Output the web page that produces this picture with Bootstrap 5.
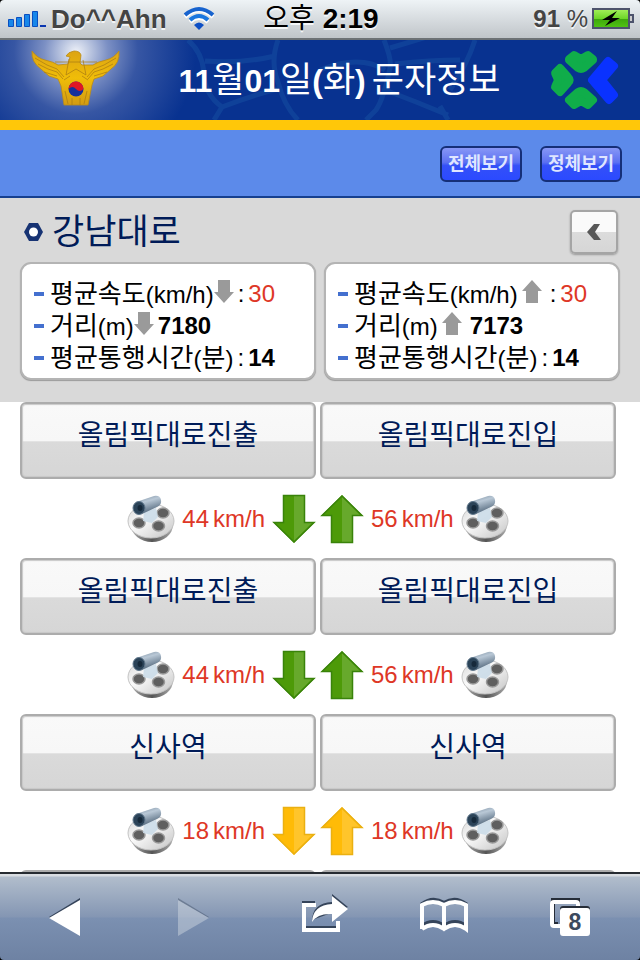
<!DOCTYPE html>
<html lang="ko">
<head>
<meta charset="utf-8">
<meta name="viewport" content="width=device-width, initial-scale=1">
<title>문자정보</title>
<link href="https://cdn.jsdelivr.net/npm/bootstrap@5.3.0/dist/css/bootstrap.min.css" rel="stylesheet">
<style>
  body { font-family: "Liberation Sans", "Noto Sans CJK KR", sans-serif; font-size: 24px; line-height: 32px; background: #000; color: #000; }
  svg { display: block; flex: none; overflow: visible; }
  .ko { font-size: 26px; }
  .status-bar { height: 40px; padding: 0 6px 0 8px; background: linear-gradient(#eef3f6, #c0c5c9); border-bottom: 2px solid #6d7275; border-radius: 4px 4px 0 0; color: #444; text-shadow: 0 2px 0 #f4f6f7; }
  .carrier { font-size: 26px; }
  .clock { font-size: 28px; color: #000; }
  .page-scroll { min-height: 0; overflow-y: auto; scrollbar-width: none; }
  .page-scroll::-webkit-scrollbar { display: none; }
  .banner { height: 90px; padding: 0 20px 0 31px; border-bottom: 10px solid #ffc709; background: radial-gradient(circle at 76px 12px, #eef1f8 0, #c3cde4 12px, #7c90c4 32px, rgba(70,98,170,.75) 62px, rgba(8,50,144,0) 120px), #083290; }
  .banner-art { z-index: 0; }
  .banner h1 { font-size: 32px; line-height: 40px; gap: 6px; }
  .big-ko { font-size: 35px; }
  .filter-bar { background: #5c8aea; border-bottom: 2px solid #17408f; padding: 16px 18px 14px; gap: 18px; }
  .filter-btn { width: 82px; height: 36px; border: 2px solid #152f78; border-radius: 6px; color: #dfe5ff; font-size: 18px; line-height: 30px; background: linear-gradient(#8797f6 0, #5b70f2 45%, #3450f8 55%, #2b4aff); }
  .summary { background: #d9d9d9; padding: 12px 20px 22px; }
  .summary h2 { font-size: 35px; line-height: 40px; color: #001b58; gap: 8px; padding-left: 3px; }
  .back-btn { width: 48px; height: 44px; margin-right: 2px; border: 2px solid #a5a5a5; border-radius: 5px; background: linear-gradient(#fafafa 50%, #dcdcdc 51%, #d6d6d6); box-shadow: 0 1px 2px #999; }
  .info-box { border: 2px solid #b4b4b4; border-radius: 11px; background: #fff; padding: 14px 12px 4px; height: 118px; box-shadow: 0 1px 1px #999; }
  .info-box li { height: 32px; }
  .pair { display: flex; gap: 4px; }
  .dash { width: 10px; height: 4px; background: #4470cf; margin-right: 6px; }
  .red { color: #de3726; }
  .arr-down { margin: 0 4px 6px 0; }
  .arr-up { margin: 0 8px 6px 4px; }
  .road { background: #fff; padding: 0 24px 0 20px; }
  .seg-btn { height: 77px; padding: 0 0 10px; color: #001b58; font-size: 28px; border: 2px solid #acacac; border-radius: 6px; background: linear-gradient(#f9f9f9 0, #f7f7f7 50%, #dadada 52%, #d6d6d6); box-shadow: inset 0 0 1px 1px #c8c8c8; }
  .speeds { height: 79px; }
  .speeds a { gap: 7px; text-decoration: none; color: #de3726; white-space: nowrap; }
  .toolbar { height: 88px; border-top: 2px solid #262b31; background: linear-gradient(#d9dde2 0 2px, #b1bdcc 3px, #8496b3 43px, #7b90b1 44px, #6e82a3); border-radius: 0 0 4px 4px; }
  .toolbar button { border: 0; background: none; padding: 0; }
</style>
<script src="https://cdn.jsdelivr.net/npm/bootstrap@5.3.0/dist/js/bootstrap.bundle.min.js"></script>
</head>
<body>
<svg width="0" height="0" class="position-absolute" aria-hidden="true">
  <defs>
    <linearGradient id="discFill" x1="0" y1="0" x2="1" y2="1"><stop offset="0" stop-color="#d4d4d4"/><stop offset=".4" stop-color="#fafafa"/><stop offset="1" stop-color="#c4c4c4"/></linearGradient>
    <linearGradient id="rimFill"><stop offset="0" stop-color="#aaa"/><stop offset=".5" stop-color="#555"/><stop offset="1" stop-color="#aaa"/></linearGradient>
    <linearGradient id="tubeFill" x1="0" y1="0" x2=".4" y2="1"><stop offset="0" stop-color="#75889a"/><stop offset=".4" stop-color="#b9c8d6"/><stop offset="1" stop-color="#53687c"/></linearGradient>
    <symbol id="cctv" viewBox="0 0 48 50">
      <ellipse cx="25" cy="31" rx="21" ry="17" fill="url(#rimFill)"/>
      <ellipse cx="24" cy="27" rx="23" ry="17" fill="url(#discFill)" stroke="#c4c4c4"/>
      <g fill="#5f5f5f" stroke="#999" stroke-width="1.5"><ellipse cx="12" cy="29" rx="6" ry="5"/><ellipse cx="31.500" cy="32" rx="6" ry="5"/><ellipse cx="36" cy="19" rx="6" ry="5"/></g>
      <path d="M17 18l12-4 2 9-6 6-9-2z" fill="#cbdbe8" opacity=".9"/>
      <path d="M9 8L27 2q6-1 7 4t-4 7L15 20z" fill="url(#tubeFill)"/>
      <ellipse cx="12" cy="14" rx="6" ry="6.500" fill="#2b4358" stroke="#61788c"/>
      <ellipse cx="13" cy="14" rx="2.500" ry="3" fill="#16293a"/>
    </symbol>
    <symbol id="arrow" viewBox="0 0 44 50">
      <path d="M11 1h22v27h10L22 49 1 28h10z" fill="currentColor"/>
      <path d="M22 2h10v27h8L22 47z" fill="#fff" opacity=".15"/>
      <path d="M11.500 1.500h21v27h9.500L22 48 2 28.500h9.500z" fill="none" stroke="var(--edge)" stroke-width="1.500"/>
    </symbol>
    <symbol id="arrowUp" viewBox="0 0 44 50">
      <path d="M11 49h22V22h10L22 1 1 22h10z" fill="currentColor"/>
      <path d="M22 48h10V21h8L22 3z" fill="#fff" opacity=".15"/>
      <path d="M11.500 48.500h21v-27h9.500L22 2 2 21.500h9.500z" fill="none" stroke="var(--edge)" stroke-width="1.500"/>
    </symbol>
    <symbol id="mini" viewBox="0 0 20 23"><path d="M4 0h12v12h4L10 23 0 12h4z" fill="#9a9a9a"/></symbol>
  </defs>
</svg>
<div class="vh-100 d-flex flex-column">
  <header class="status-bar d-flex align-items-center flex-shrink-0">
    <div class="col d-flex align-items-center">
      <svg width="39" height="18" viewBox="0 0 39 18"><g fill="#1787ea" stroke="#0a4ec0"><path d="M.5 9.500h5v7h-5zM8.500 7.500h5v9h-5zM16.500 4.500h5v12h-5zM24.500 1.500h5v15h-5z"/></g><path d="M32 15h6v2h-6z" fill="#0a36b0"/></svg>
      <strong class="carrier ms-1">Do^^Ahn</strong>
      <svg class="ms-3" width="32" height="24" viewBox="0 0 32 24" fill="none" stroke-width="4"><g stroke="#fff" transform="translate(0 1)"><path d="M2 9q14-13 28 0M7 14q9-8 18 0"/></g><path d="M2 8q14-12 28 0" stroke="#1763ce"/><path d="M7 13q9-8 18 0" stroke="#1976df"/><path d="M11 18q5-5 10 0l-5 5z" fill="#0d4fc5"/></svg>
    </div>
    <div class="clock"><span>오후</span> <strong>2:19</strong></div>
    <div class="col d-flex align-items-center justify-content-end">
      <span><strong>91</strong> %</span>
      <svg class="ms-1" width="42" height="22" viewBox="0 0 42 22"><defs><linearGradient id="bat" x2="0" y2="1"><stop stop-color="#a5f05c"/><stop offset=".5" stop-color="#6ed629"/><stop offset=".55" stop-color="#3fa90c"/><stop offset="1" stop-color="#52c514"/></linearGradient></defs><rect x="1" y="1" width="36" height="19" fill="url(#bat)" stroke="#4d536c" stroke-width="2"/><path d="M38 7h3v7h-3" fill="#ccc" stroke="#4d536c" stroke-width="2"/><path d="M25 3L10 12h8l-5 6 15-8h-8z" fill="#000"/></svg>
    </div>
  </header>

  <main class="page-scroll flex-grow-1 bg-white">
    <div class="banner position-relative d-flex align-items-center justify-content-between">
      <svg class="banner-art position-absolute top-0 start-0 w-100 h-100 overflow-hidden" viewBox="0 0 640 80" preserveAspectRatio="xMidYMid slice" fill="none" stroke="#1b58a8" stroke-width="5" opacity=".4"><path d="M188 0q14 12 16 32q0 22 18 35q25-10 55-18M205 21q36 3 70-5M278 0q-8 22 0 42q6 24 20 38M222 67l-8 13M384 0q8 20 6 28q-6 30-14 42l-10 10M390 8l40-12M395 24q35-4 65-4M475 0q-8 25-25 50M320 30q40-16 65 0M385 50q32 12 63 25M440 66l8 14"/></svg>
      <svg class="position-relative mb-1" width="90" height="57" viewBox="0 0 90 57" role="img" aria-label="경찰">
        <defs><linearGradient id="gold" x2="0" y2="1"><stop stop-color="#dca414"/><stop offset=".5" stop-color="#f0bd08"/><stop offset="1" stop-color="#d29b12"/></linearGradient></defs>
        <path d="M1 1q5 7 13 9 9 2 13 5l10-1 2-7-4-1q2-4 8-5 6 0 7 4l-1 8 2 2 11 0q4-3 13-5 8-2 13-9 1 12-8 18l-8 7-9 3-2 6-4 20H33l-3-19-3-7-9-3-8-7Q0 12 1 1z" fill="url(#gold)" stroke="#b98a18" stroke-width=".8"/>
        <path d="M4 8l12 7 10 4 7 8M7 14l10 5 9 3 6 7M13 22l13 4M85 8l-12 7-10 4-7 8M82 14l-10 5-9 3-6 7M76 22l-13 4M24 12h42M38 9l-3 16 10-6 10 6-3-15M33 30l6-4M57 30l-6-4M34 41l3 13M56 41l-3 13M41 48v7M49 48v7" fill="none" stroke="#a87a14" stroke-width=".9" opacity=".8"/>
        <circle cx="45" cy="39" r="7.500" fill="#15309b"/><path d="M37.500 39a7.500 7.500 0 0 1 15 0q-4 4-7.500 0t-7.500 0z" fill="#e01624"/>
      </svg>
      <h1 class="position-relative text-white fw-normal m-0 ms-2 d-flex"><span><b>11</b><span class="big-ko">월</span><b>01</b><span class="big-ko">일</span><b>(</b><span class="big-ko">화</span><b>)</b></span><span class="big-ko">문자정보</span></h1>
      <svg class="position-relative" width="70" height="63" viewBox="0 0 70 63" stroke-width="8" stroke-linejoin="round" role="img" aria-label="로고"><g fill="#10ad4a" stroke="#10ad4a"><path d="M19 10l5-4 7 4 7-4 5 4v1l-9 8q-3 2-6 0l-9-8zM19 51l5 5 7-4 7 4 5-5-9-8q-3-2-6 0zM5 24l5-5 8 9q3 3 0 6l-8 9-5-5 3-7z"/></g><path d="M42 31l16-19 6 5-12 14 12 15-5 5z" fill="#0a32ff" stroke="#0a32ff"/></svg>
    </div>

    <nav class="filter-bar d-flex justify-content-end">
      <button class="filter-btn fw-bold p-0">전체보기</button>
      <button class="filter-btn fw-bold p-0">정체보기</button>
    </nav>

    <section class="summary">
      <div class="d-flex justify-content-between mb-2">
        <h2 class="d-flex align-items-center fw-normal m-0"><svg width="21" height="20" viewBox="0 0 21 20"><path d="M6 1h9l5 9-5 9H6l-5-9z" fill="#173373"/><circle cx="10.500" cy="10" r="4.500" fill="#fff"/></svg><span>강남대로</span></h2>
        <button class="back-btn p-0 d-flex align-items-center justify-content-center" aria-label="뒤로"><svg width="16" height="16" viewBox="0 0 16 16"><path d="M8 0h6L9 8l6 8H8L1 8z" fill="#585858"/></svg></button>
      </div>
      <div class="row gx-2">
        <div class="col"><ul class="info-box list-unstyled m-0">
          <li class="d-flex align-items-center"><i class="dash"></i><span><span class="ko">평균속도</span>(km/h)</span><svg class="arr-down" width="20" height="23"><use href="#mini"/></svg><span class="pair"><span>:</span><span class="red">30</span></span></li>
          <li class="d-flex align-items-center"><i class="dash"></i><span><span class="ko">거리</span>(m)</span><svg class="arr-down" width="20" height="23"><use href="#mini"/></svg><b>7180</b></li>
          <li class="d-flex align-items-center"><i class="dash"></i><span class="pair"><span><span class="ko">평균통행시간</span>(<span class="ko">분</span>)</span><span>:</span><b>14</b></span></li>
        </ul></div>
        <div class="col"><ul class="info-box list-unstyled m-0">
          <li class="d-flex align-items-center"><i class="dash"></i><span><span class="ko">평균속도</span>(km/h)</span><svg class="arr-up" width="20" height="23"><use href="#mini" transform="rotate(180 10 11.500)"/></svg><span class="pair"><span>:</span><span class="red">30</span></span></li>
          <li class="d-flex align-items-center"><i class="dash"></i><span><span class="ko">거리</span>(m)</span><svg class="arr-up" width="20" height="23"><use href="#mini" transform="rotate(180 10 11.500)"/></svg><b>7173</b></li>
          <li class="d-flex align-items-center"><i class="dash"></i><span class="pair"><span><span class="ko">평균통행시간</span>(<span class="ko">분</span>)</span><span>:</span><b>14</b></span></li>
        </ul></div>
      </div>
    </section>

    <section class="road" id="road"></section>
  </main>

  <footer class="toolbar d-flex align-items-center flex-shrink-0">
    <button class="col d-flex justify-content-center" aria-label="이전"><svg width="60" height="44" viewBox="0 0 60 44"><path d="M15 22L46 3v4L17 24z" fill="#35445a"/><path d="M15 23L46 5v36z" fill="#fff"/></svg></button>
    <button class="col d-flex justify-content-center" aria-label="다음" disabled><svg width="60" height="44" viewBox="0 0 60 44" opacity=".4"><path d="M47 22L16 3v4l29 17z" fill="#35445a"/><path d="M47 23L16 5v36z" fill="#dfe5ea"/></svg></button>
    <button class="col d-flex justify-content-center" aria-label="공유"><svg width="60" height="44" viewBox="0 0 60 44"><path d="M25 8H14V33H48V27" fill="none" stroke="#35445a" stroke-width="4"/><path d="M26 10H14V35H48V26" fill="none" stroke="#fff" stroke-width="4"/><path d="M22 25Q23 8 42 7V-1L58 12z" fill="#35445a"/><path d="M22 27Q23 10 42 9V1L58 14 42 27V19Q28 18 22 27z" fill="#fff"/></svg></button>
    <button class="col d-flex justify-content-center" aria-label="책갈피"><svg width="60" height="44" viewBox="0 0 60 44" fill="none" stroke-width="4"><path d="M4 32V10Q15 2 26 9Q37 2 48 10V32Q37 24 26 32Q15 24 4 32" stroke="#35445a" transform="translate(0 -1)"/><path d="M4 34V10Q15 4 26 10Q37 4 48 10V34Q37 26 26 34Q15 26 4 34M26 10v24" stroke="#fff"/></svg></button>
    <button class="col d-flex justify-content-center" aria-label="페이지 8개"><svg width="60" height="44" viewBox="0 0 60 44"><path d="M12 29H7V5h25v6" fill="none" stroke="#262d38" stroke-width="4"/><path d="M14 31H8q-2 0-2-2V9q0-2 2-2h22q2 0 2 2v3" fill="none" stroke="#fff" stroke-width="4"/><rect x="14" y="11" width="30" height="29" rx="3" fill="#262d38"/><rect x="14" y="13" width="30" height="28" rx="3" fill="#fff"/><text x="29" y="35" text-anchor="middle" font-size="23" font-weight="700" fill="#3c4a5e">8</text></svg></button>
  </footer>
</div>
<script>
  const green = { color: '#4d9a08', edge: '#39830a' };
  const amber = { color: '#ffbb06', edge: '#eab011' };
  const segments = [
    { left: '올림픽대로진출', right: '올림픽대로진입', down: 44, up: 56, tone: green },
    { left: '올림픽대로진출', right: '올림픽대로진입', down: 44, up: 56, tone: green },
    { left: '신사역', right: '신사역', down: 18, up: 18, tone: amber },
    { left: '', right: '' }
  ];
  const cam = '<svg width="48" height="50" role="img" aria-label="CCTV"><use href="#cctv"/></svg>';
  const arrow = (tone, id) => `<svg width="44" height="50" style="color:${tone.color};--edge:${tone.edge}"><use href="#${id}"/></svg>`;
  const speed = n => `<span class="d-flex gap-1"><span>${n}</span><span>km/h</span></span>`;
  document.getElementById('road').innerHTML = segments.map(s => `
    <div class="row gx-1 flex-nowrap">
      <div class="col"><button class="seg-btn w-100 d-block">${s.left}</button></div>
      <div class="col"><button class="seg-btn w-100 d-block">${s.right}</button></div>
    </div>` + (s.tone ? `
    <div class="speeds row gx-1 flex-nowrap align-items-center">
      <div class="col"><a href="#road" class="d-flex align-items-center justify-content-end">${cam}${speed(s.down)}${arrow(s.tone, 'arrow')}</a></div>
      <div class="col"><a href="#road" class="d-flex align-items-center">${arrow(s.tone, 'arrowUp')}${speed(s.up)}${cam}</a></div>
    </div>` : '')).join('');
</script>
</body>
</html>
